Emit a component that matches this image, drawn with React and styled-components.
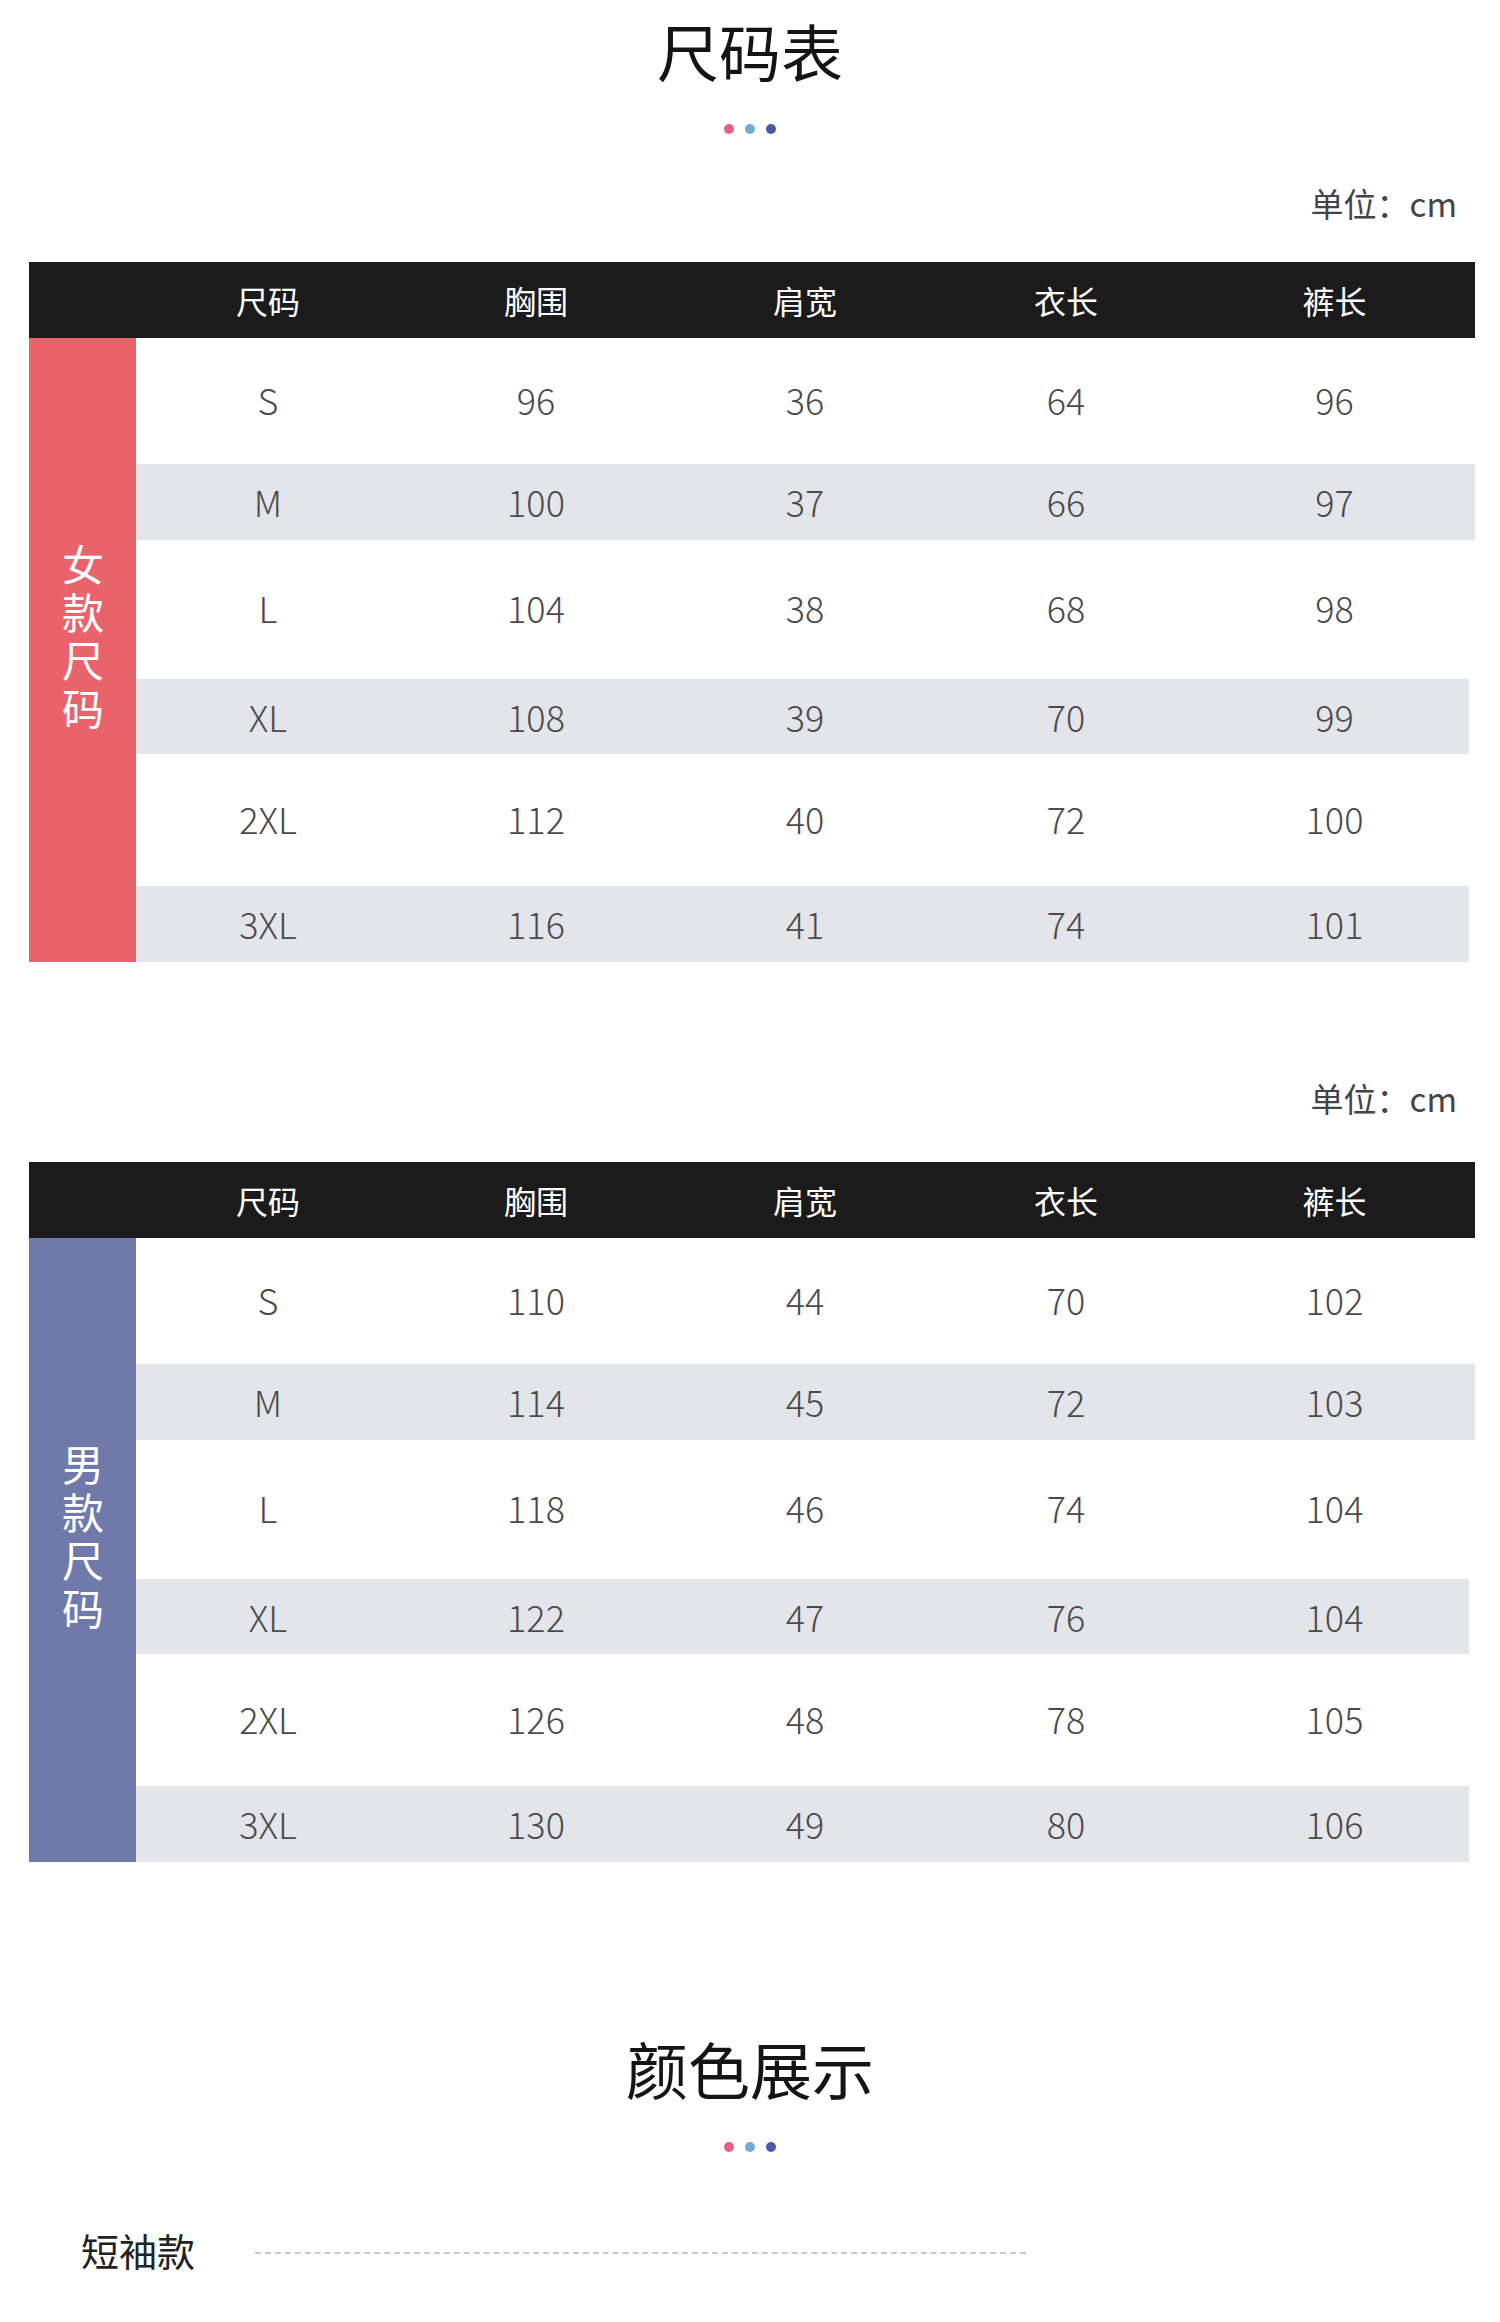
import React from 'react';
import styled, { createGlobalStyle } from 'styled-components';

const GlobalStyle = createGlobalStyle`
  html, body { margin: 0; padding: 0; background: #fff; }
  body { font-family: "Noto Sans CJK SC", "Noto Sans", sans-serif; }
`;

const Page = styled.div`
  width: 1500px;
  min-height: 2322px;
  background: #fff;
  display: flex;
  flex-direction: column;
`;

const Heading = styled.section`
  display: flex;
  flex-direction: column;
  align-items: center;
  margin-top: ${(p) => p.$top}px;
`;

const Title = styled.h2`
  margin: 0;
  font-size: 62px;
  line-height: 62px;
  font-weight: 400;
  color: #141414;
`;

const Dots = styled.div`
  display: flex;
  gap: 11px;
  margin-top: ${(p) => p.$gap}px;
`;

const Dot = styled.span`
  width: 10px;
  height: 10px;
  border-radius: 50%;
  background: ${(p) => p.$color};
`;

const Unit = styled.div`
  margin-top: ${(p) => p.$top}px;
  padding-right: 43px;
  text-align: right;
  font-size: 33px;
  line-height: 33px;
  color: #444;
`;

const Table = styled.div`
  margin: ${(p) => p.$top}px 25px 0 29px;
`;

const COLS = '264px 272px 266px 256px 1fr';

const HeaderRow = styled.div`
  display: grid;
  grid-template-columns: 107px ${COLS};
  height: 76px;
  align-items: center;
  background: #1b1b1b;
  color: #fff;
`;

const HeadCell = styled.div`
  text-align: center;
  font-size: 32px;
  line-height: 1;
`;

const Body = styled.div`
  display: flex;
`;

const Side = styled.div`
  width: 107px;
  flex: none;
  background: ${(p) => p.$color};
  display: flex;
  align-items: center;
  justify-content: center;
`;

const SideLabel = styled.div`
  writing-mode: vertical-rl;
  text-orientation: upright;
  font-size: 42px;
  font-weight: 400;
  line-height: 1;
  letter-spacing: 6px;
  color: #fff;
  margin-bottom: 21px;
`;

const Rows = styled.div`
  flex: 1;
  display: flex;
  flex-direction: column;
`;

const Row = styled.div`
  display: grid;
  grid-template-columns: ${COLS};
  height: ${(p) => p.$h}px;
  align-items: center;
  background: ${(p) =>
    p.$shaded
      ? `linear-gradient(to right, #e3e5eb calc(100% - ${p.$inset}px), transparent 0)`
      : 'transparent'};
`;

const Cell = styled.div`
  text-align: center;
  font-size: 36px;
  font-weight: 300;
  line-height: 1;
  color: #4a4a4a;
  padding-bottom: ${(p) => (p.$shaded ? 2 : 5)}px;
`;

const Swatch = styled.div`
  display: flex;
  align-items: center;
  margin-top: ${(p) => p.$top}px;
  padding-left: 81px;
`;

const SwatchLabel = styled.span`
  font-size: 38px;
  line-height: 40px;
  color: #222;
`;

const DashLine = styled.div`
  margin: 6px 0 0 60px;
  width: 771px;
  border-top: 2px dashed #c9c9c9;
`;

const DOT_COLORS = ['#ea5f7f', '#74abd3', '#4c58a8'];
const HEADS = ['尺码', '胸围', '肩宽', '衣长', '裤长'];
const HEIGHTS = [126, 76, 139, 75, 132, 76];
const INSETS = [0, 0, 0, 6, 0, 6];

const women = [
  ['S', 96, 36, 64, 96],
  ['M', 100, 37, 66, 97],
  ['L', 104, 38, 68, 98],
  ['XL', 108, 39, 70, 99],
  ['2XL', 112, 40, 72, 100],
  ['3XL', 116, 41, 74, 101],
];

const men = [
  ['S', 110, 44, 70, 102],
  ['M', 114, 45, 72, 103],
  ['L', 118, 46, 74, 104],
  ['XL', 122, 47, 76, 104],
  ['2XL', 126, 48, 78, 105],
  ['3XL', 130, 49, 80, 106],
];

function SectionHeading({ title, top }) {
  return (
    <Heading $top={top}>
      <Title>{title}</Title>
      <Dots $gap={43}>
        {DOT_COLORS.map((c) => (
          <Dot key={c} $color={c} />
        ))}
      </Dots>
    </Heading>
  );
}

function SizeTable({ label, color, data, top }) {
  return (
    <Table $top={top}>
      <HeaderRow>
        <span />
        {HEADS.map((h) => (
          <HeadCell key={h}>{h}</HeadCell>
        ))}
      </HeaderRow>
      <Body>
        <Side $color={color}>
          <SideLabel>{label}</SideLabel>
        </Side>
        <Rows>
          {data.map((r, i) => {
            const shaded = i % 2 === 1;
            return (
              <Row key={r[0]} $h={HEIGHTS[i]} $shaded={shaded} $inset={INSETS[i]}>
                {r.map((v, j) => (
                  <Cell key={j} $shaded={shaded}>
                    {v}
                  </Cell>
                ))}
              </Row>
            );
          })}
        </Rows>
      </Body>
    </Table>
  );
}

export default function App() {
  return (
    <>
      <GlobalStyle />
      <Page>
        <SectionHeading title="尺码表" top={19} />
        <Unit $top={53}>单位：cm</Unit>
        <SizeTable label="女款尺码" color="#e8636a" data={women} top={42} />
        <Unit $top={120}>单位：cm</Unit>
        <SizeTable label="男款尺码" color="#6f7aab" data={men} top={47} />
        <SectionHeading title="颜色展示" top={175} />
        <Swatch $top={78}>
          <SwatchLabel>短袖款</SwatchLabel>
          <DashLine />
        </Swatch>
      </Page>
    </>
  );
}
